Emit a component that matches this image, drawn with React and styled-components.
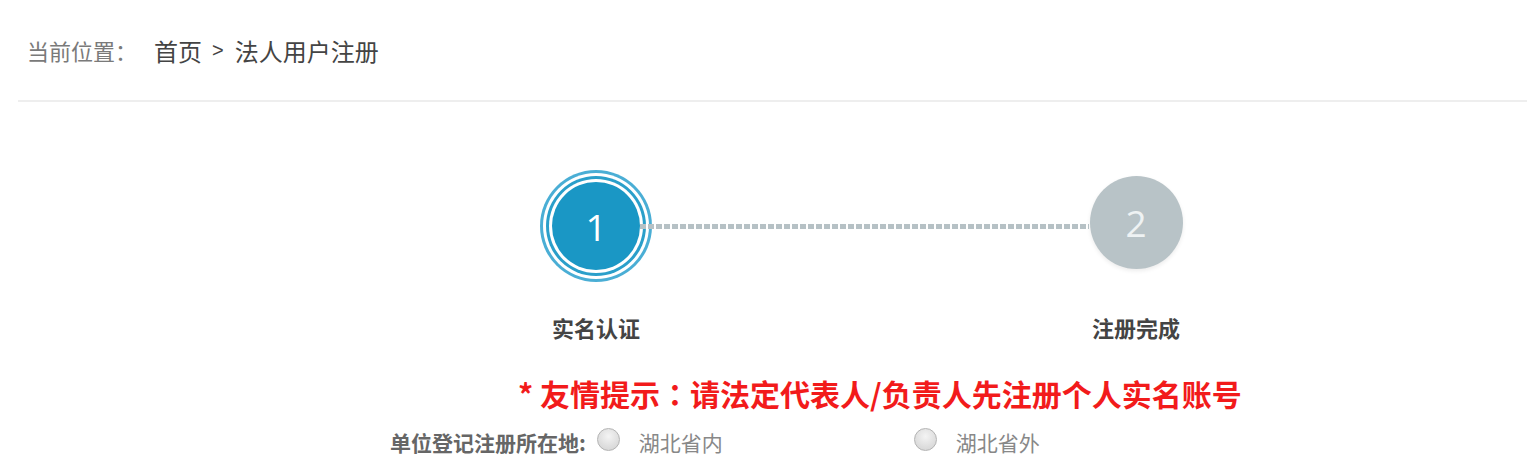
import React from 'react';
import styled, { createGlobalStyle } from 'styled-components';

const GlobalStyle = createGlobalStyle`
  html, body {
    margin: 0;
    padding: 0;
    background: #fff;
  }
  body {
    font-family: "Noto Sans CJK SC", "Noto Sans", sans-serif;
  }
`;

const Page = styled.div`
  width: 1509px;
  padding-left: 18px;
`;

const Breadcrumb = styled.div`
  height: 100px;
  display: flex;
  align-items: center;
  padding-left: 9px;
  border-bottom: 2px solid #eeeeee;
  box-sizing: content-box;
`;

const CrumbLabel = styled.span`
  font-size: 22px;
  color: #7a7a7a;
  margin-right: 17px;
`;

const CrumbLink = styled.span`
  font-size: 24px;
  color: #444;
`;

const CrumbSep = styled.span`
  font-family: "Liberation Sans", sans-serif;
  font-size: 20px;
  color: #444;
  margin: 0 11px 0 10px;
`;

const Steps = styled.div`
  display: grid;
  grid-template-columns: 140px 400px 140px;
  margin-left: 508px;
  padding-top: 64px;
`;

const Step = styled.div`
  display: flex;
  flex-direction: column;
  align-items: center;
`;

const CircleBox = styled.div`
  height: 120px;
  display: flex;
  align-items: center;
  justify-content: center;
`;

const Circle = styled.div`
  position: relative;
  z-index: 0;
  width: ${p => (p.$active ? 88 : 93)}px;
  height: ${p => (p.$active ? 88 : 93)}px;
  margin-bottom: ${p => (p.$active ? 0 : 8)}px;
  border-radius: 50%;
  display: flex;
  align-items: center;
  justify-content: center;
  font-family: "Open Sans", sans-serif;
  font-size: 37px;
  color: ${p => (p.$active ? '#fff' : '#eef2f3')};
  background: ${p => (p.$active ? '#1a97c5' : '#b8c3c7')};
  box-shadow: ${p =>
    p.$active
      ? '0 0 0 3px #fff, 0 0 0 6px #2a9fca, 0 0 0 9px #fff, 0 0 0 12px #4aaed5'
      : '0 2px 4px rgba(0, 0, 0, 0.08)'};
`;

const Connector = styled.div`
  position: relative;
  z-index: 1;
  align-self: start;
  height: 5px;
  margin: 58px -23px 0 -26px;
  background: repeating-linear-gradient(
    to right,
    #b6c1c5 0,
    #b6c1c5 6px,
    transparent 6px,
    transparent 8px
  );
`;

const StepLabel = styled.div`
  margin-top: 26px;
  font-size: 22px;
  line-height: 30px;
  font-weight: 700;
  color: #444;
  white-space: nowrap;
`;

const Notice = styled.div`
  margin-top: 31px;
  padding-left: 500px;
  font-size: 30px;
  line-height: 40px;
  font-weight: 700;
  color: #f21b1b;
  white-space: nowrap;
`;

const NoticeColon = styled.span`
  font-family: "Noto Sans CJK TC", sans-serif;
`;

const FormRow = styled.div`
  display: flex;
  align-items: center;
  margin-top: 14px;
  padding-left: 372px;
  height: 30px;
`;

const FieldLabel = styled.span`
  font-size: 21px;
  font-weight: 700;
  color: #666;
  margin-right: 11px;
  white-space: nowrap;
`;

const Option = styled.label`
  display: flex;
  align-items: center;
  width: ${p => p.$width || 'auto'};
  font-size: 21px;
  color: #888;
`;

const Radio = styled.input`
  appearance: none;
  width: 23px;
  height: 23px;
  margin: 0 19px 5px 0;
  border-radius: 50%;
  border: 1px solid #b3b3b3;
  background: radial-gradient(circle at 50% 35%, #f4f4f4 0%, #dedede 60%, #d2d2d2 100%);
  box-sizing: border-box;
`;

export default function App() {
  return (
    <>
      <GlobalStyle />
      <Page>
        <Breadcrumb>
          <CrumbLabel>当前位置：</CrumbLabel>
          <CrumbLink>首页</CrumbLink>
          <CrumbSep>&gt;</CrumbSep>
          <CrumbLink>法人用户注册</CrumbLink>
        </Breadcrumb>

        <Steps>
          <Step>
            <CircleBox>
              <Circle $active>1</Circle>
            </CircleBox>
            <StepLabel>实名认证</StepLabel>
          </Step>
          <Connector />
          <Step>
            <CircleBox>
              <Circle>2</Circle>
            </CircleBox>
            <StepLabel>注册完成</StepLabel>
          </Step>
        </Steps>

        <Notice>
          * 友情提示<NoticeColon>：</NoticeColon>请法定代表人/负责人先注册个人实名账号
        </Notice>

        <FormRow>
          <FieldLabel>单位登记注册所在地:</FieldLabel>
          <Option $width="317px">
            <Radio type="radio" name="area" />
            湖北省内
          </Option>
          <Option>
            <Radio type="radio" name="area" />
            湖北省外
          </Option>
        </FormRow>
      </Page>
    </>
  );
}
